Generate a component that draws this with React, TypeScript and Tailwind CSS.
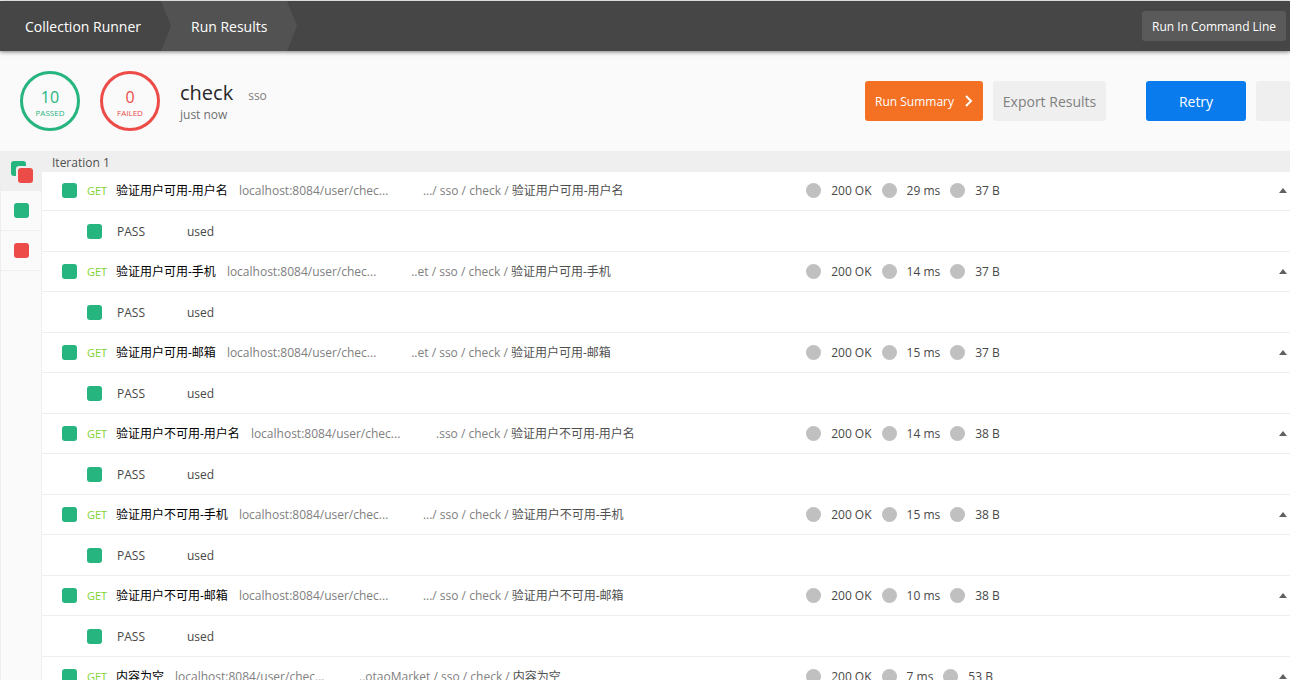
import React from "react";

type Result = {
  name: string;
  path: string;
  time: string;
  size: string;
};

const results: Result[] = [
  { name: "验证用户可用-用户名", path: ".../ sso / check / ", time: "29 ms", size: "37 B" },
  { name: "验证用户可用-手机", path: "..et / sso / check / ", time: "14 ms", size: "37 B" },
  { name: "验证用户可用-邮箱", path: "..et / sso / check / ", time: "15 ms", size: "37 B" },
  { name: "验证用户不可用-用户名", path: ".sso / check / ", time: "14 ms", size: "38 B" },
  { name: "验证用户不可用-手机", path: ".../ sso / check / ", time: "15 ms", size: "38 B" },
  { name: "验证用户不可用-邮箱", path: ".../ sso / check / ", time: "10 ms", size: "38 B" },
  { name: "内容为空", path: "..otaoMarket / sso / check / ", time: "7 ms", size: "53 B" },
];

function Square({ color = "bg-[#26b47f]" }: { color?: string }) {
  return <span className={`block size-[15px] shrink-0 rounded-[3px] ${color}`} />;
}

function Metric({ children }: { children: React.ReactNode }) {
  return (
    <span className="flex items-center gap-[10px]">
      <span className="size-[15px] shrink-0 rounded-full bg-[#c0c0c0]" />
      <span className="whitespace-nowrap text-[#484848]">{children}</span>
    </span>
  );
}

function Tally({ count, label, tone }: { count: number; label: string; tone: string }) {
  return (
    <div
      className={`flex size-[60px] shrink-0 flex-col items-center justify-center rounded-full border-[3px] ${tone}`}
    >
      <span className="mt-1 text-base leading-5">{count}</span>
      <span className="text-[8px] leading-3">{label}</span>
    </div>
  );
}

function ResultRow({ result }: { result: Result }) {
  return (
    <li>
      <div className="flex h-[40px] items-center border-b border-[#eeeeee] pl-5">
        <div className="flex w-[60.6%] shrink-0 items-center">
          <Square />
          <div className="ml-[10px] flex items-baseline">
            <span className="w-[29px] shrink-0 text-[11px] font-medium text-[#7ed32f]">GET</span>
            <span className="whitespace-nowrap text-black">{result.name}</span>
            <span className="ml-[11px] w-[148px] shrink-0 whitespace-nowrap text-[#808080]">
              localhost:8084/user/chec...
            </span>
            <span className="ml-[36px] w-[200px] shrink-0 whitespace-nowrap text-right text-[#808080]">
              {result.path}
              <span className="text-[#505050]">{result.name}</span>
            </span>
          </div>
        </div>
        <div className="flex items-center gap-[10px]">
          <Metric>200 OK</Metric>
          <Metric>{result.time}</Metric>
          <Metric>{result.size}</Metric>
        </div>
        <button type="button" aria-label="Collapse" className="ml-auto mr-[3px] p-0">
          <svg width="8" height="5" viewBox="0 0 8 5" className="block">
            <path d="M4 0 8 5H0Z" fill="#606060" />
          </svg>
        </button>
      </div>
      <div className="flex h-[41px] items-center border-b border-[#eeeeee] pl-[45px] text-[#484848]">
        <Square />
        <span className="ml-[15px] w-[70px] pt-0.5">PASS</span>
        <span className="pt-0.5">used</span>
      </div>
    </li>
  );
}

export default function App() {
  return (
    <div className="flex h-screen flex-col overflow-hidden bg-[#fafafa] font-['Open_Sans','Noto_Sans_CJK_SC',sans-serif] text-xs">
      <header className="z-10 mt-px flex h-[50px] shrink-0 items-center justify-between bg-[#464646] pr-1 text-white shadow-[0_1px_4px_rgba(0,0,0,0.5)]">
        <nav className="flex h-full text-sm font-medium">
          <a href="#runner" className="flex w-[161px] items-center pl-[25px] pt-0.5">
            Collection Runner
          </a>
          <a
            href="#results"
            className="flex w-[136px] items-center bg-[#525252] pl-[30px] pt-0.5 [clip-path:polygon(0_0,126px_0,100%_50%,126px_100%,0_100%,10px_50%)]"
          >
            Run Results
          </a>
        </nav>
        <button type="button" className="h-[30px] rounded-[3px] bg-[#5a5a5a] px-[10px] pt-0.5 text-xs font-medium">
          Run In Command Line
        </button>
      </header>

      <section className="flex h-[100px] shrink-0 items-center pl-5">
        <div className="flex gap-5">
          <Tally count={10} label="PASSED" tone="border-[#26b47f] text-[#26b47f]" />
          <Tally count={0} label="FAILED" tone="border-[#ed4b48] text-[#ed4b48]" />
        </div>
        <div className="ml-5">
          <div className="flex items-baseline gap-[15px]">
            <h1 className="text-xl leading-7 text-[#282828]">check</h1>
            <span className="text-[#808080]">sso</span>
          </div>
          <p className="text-[#707070]">just now</p>
        </div>
        <div className="ml-auto flex">
          <button
            type="button"
            className="flex h-10 w-[118px] items-center justify-between rounded-[3px] bg-[#f47023] px-[10px] text-xs font-medium text-white"
          >
            <span className="pt-0.5">Run Summary</span>
            <svg width="8" height="12" viewBox="0 0 8 12" fill="none" stroke="currentColor" strokeWidth="2">
              <path d="M1 1 6 6 1 11" />
            </svg>
          </button>
          <button
            type="button"
            className="ml-[10px] h-10 w-[113px] rounded-[3px] bg-[#efefef] pt-0.5 text-sm text-[#808080]"
          >
            Export Results
          </button>
          <button
            type="button"
            className="ml-10 h-10 w-[100px] rounded-[3px] bg-[#097bed] pt-0.5 text-sm font-medium text-white"
          >
            Retry
          </button>
          <button
            type="button"
            aria-label="New"
            className="ml-[10px] h-10 w-[34px] rounded-l-[3px] bg-[#efefef]"
          />
        </div>
      </section>

      <div className="flex min-h-0 flex-1">
        <aside className="w-[42px] shrink-0 border-x border-[#eeeeee]">
          <button
            type="button"
            aria-label="All tests"
            className="flex h-[40px] w-full items-center justify-center bg-[#efefef] pl-0.5 pt-0.5"
          >
            <svg width="22" height="22" viewBox="0 0 22 22">
              <rect width="15" height="15" rx="3" fill="#26b47f" />
              <rect x="5" y="5" width="18" height="18" rx="3" fill="#efefef" />
              <rect x="7" y="7" width="15" height="15" rx="3" fill="#ed4b48" />
            </svg>
          </button>
          <button
            type="button"
            aria-label="Passed tests"
            className="flex h-[40px] w-full items-center justify-center border-b border-[#eeeeee]"
          >
            <Square />
          </button>
          <button
            type="button"
            aria-label="Failed tests"
            className="flex h-[40px] w-full items-center justify-center border-b border-[#eeeeee]"
          >
            <Square color="bg-[#ed4b48]" />
          </button>
        </aside>
        <main className="min-w-0 flex-1 overflow-hidden bg-white">
          <h2 className="relative flex h-5 items-center bg-[#efefef] pl-[10px] pt-1 text-[#505050] shadow-[0_1px_0_#efefef]">
            Iteration 1
          </h2>
          <ul>
            {results.map((result) => (
              <ResultRow key={result.name} result={result} />
            ))}
          </ul>
        </main>
      </div>
    </div>
  );
}
